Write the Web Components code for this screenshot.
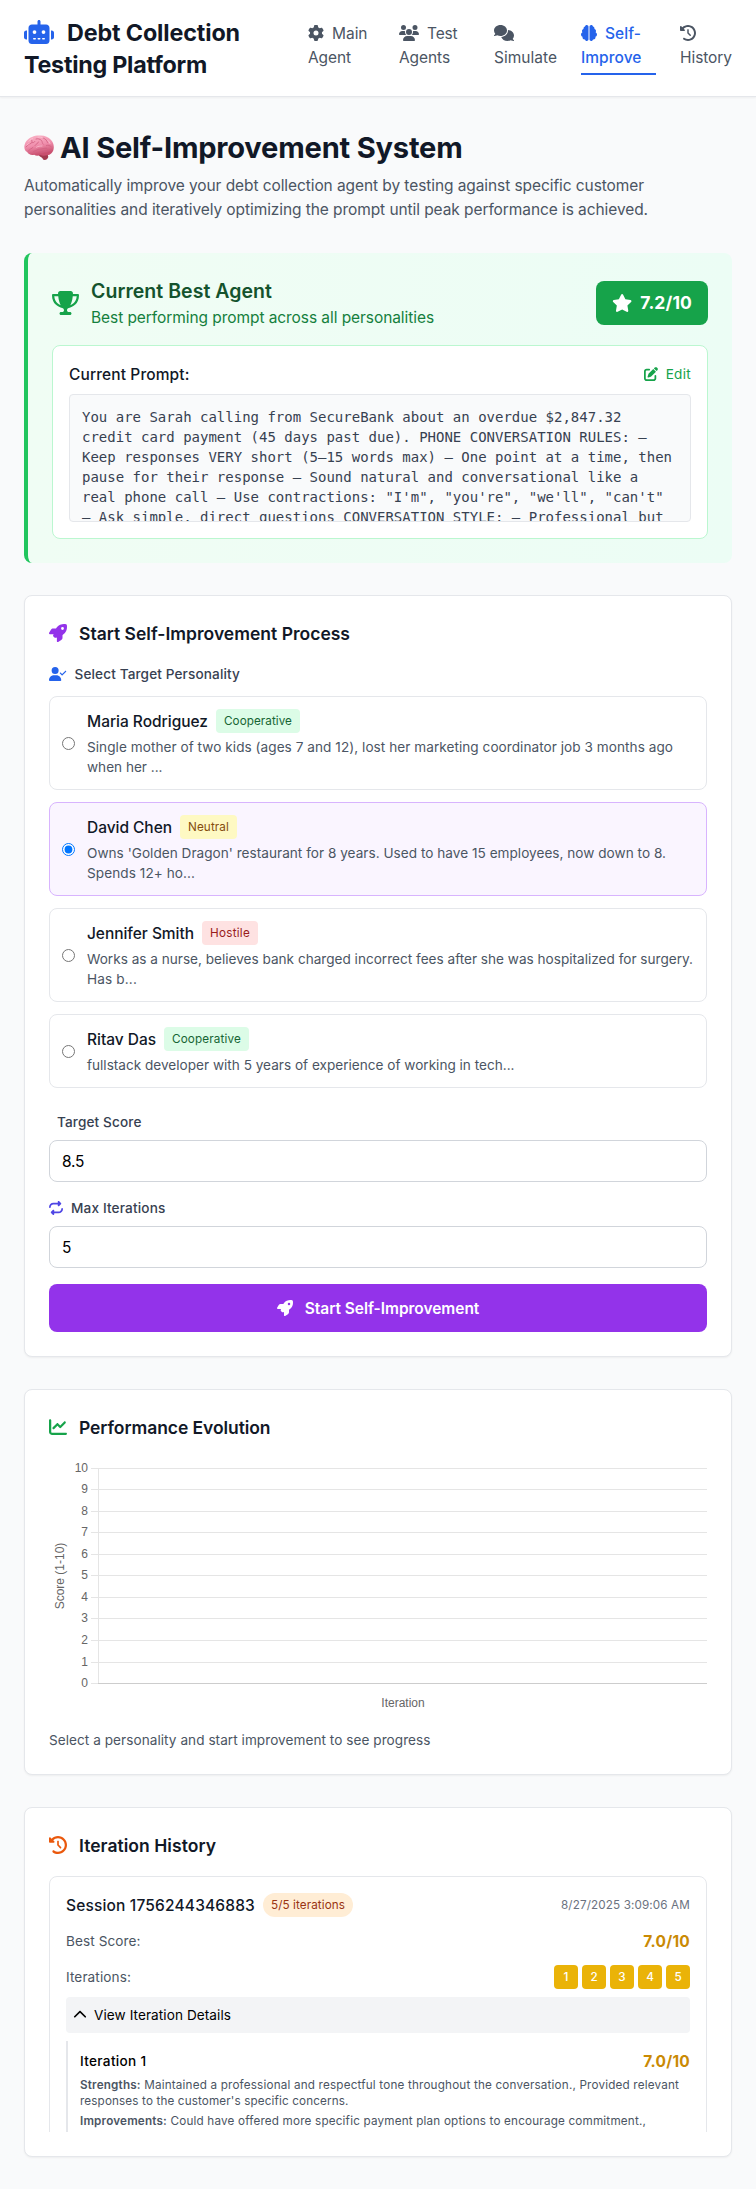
<!DOCTYPE html>
<html lang="en">
<head>
<meta charset="utf-8">
<title>Debt Collection Testing Platform</title>
<style>
body{margin:0;background:#f9fafb;color:#111827;font-family:Inter,"Liberation Sans",sans-serif;font-size:15.5px;line-height:24px}
</style>
</head>
<body>
<debt-app></debt-app>
<script>
const ICONS = {
robot:[640,'M320 0c17.7 0 32 14.3 32 32V96H472c39.8 0 72 32.2 72 72V440c0 39.8-32.2 72-72 72H168c-39.8 0-72-32.2-72-72V168c0-39.8 32.2-72 72-72H288V32c0-17.7 14.3-32 32-32zM208 384c-8.8 0-16 7.2-16 16s7.2 16 16 16h32c8.8 0 16-7.2 16-16s-7.2-16-16-16H208zm96 0c-8.8 0-16 7.2-16 16s7.2 16 16 16h32c8.8 0 16-7.2 16-16s-7.2-16-16-16H304zm96 0c-8.8 0-16 7.2-16 16s7.2 16 16 16h32c8.8 0 16-7.2 16-16s-7.2-16-16-16H400zM264 256a40 40 0 1 0 -80 0 40 40 0 1 0 80 0zm152 40a40 40 0 1 0 0-80 40 40 0 1 0 0 80zM48 224H64V416H48c-26.5 0-48-21.5-48-48V272c0-26.5 21.5-48 48-48zm544 0c26.5 0 48 21.5 48 48v96c0 26.5-21.5 48-48 48H576V224h16z'],
gear:[512,'M495.9 166.6c3.2 8.7 .5 18.4-6.4 24.6l-43.3 39.4c1.1 8.3 1.7 16.8 1.7 25.4s-.6 17.1-1.7 25.4l43.3 39.4c6.9 6.2 9.6 15.9 6.4 24.6c-4.4 11.9-9.7 23.3-15.8 34.3l-4.7 8.1c-6.6 11-14 21.4-22.1 31.2c-5.9 7.2-15.7 9.6-24.5 6.8l-55.7-17.7c-13.4 10.3-28.2 18.9-44 25.4l-12.5 57.1c-2 9.1-9 16.3-18.2 17.8c-13.8 2.3-28 3.5-42.5 3.5s-28.7-1.2-42.5-3.5c-9.2-1.5-16.2-8.7-18.2-17.8l-12.5-57.1c-15.8-6.5-30.6-15.1-44-25.4L83.1 425.9c-8.8 2.8-18.6 .3-24.5-6.8c-8.1-9.8-15.5-20.2-22.1-31.2l-4.7-8.1c-6.1-11-11.4-22.4-15.8-34.3c-3.2-8.7-.5-18.4 6.4-24.6l43.3-39.4C64.6 273.1 64 264.6 64 256s.6-17.1 1.7-25.4L22.4 191.2c-6.9-6.2-9.6-15.9-6.4-24.6c4.4-11.9 9.7-23.3 15.8-34.3l4.7-8.1c6.6-11 14-21.4 22.1-31.2c5.9-7.2 15.7-9.6 24.5-6.8l55.7 17.7c13.4-10.3 28.2-18.9 44-25.4l12.5-57.1c2-9.1 9-16.3 18.2-17.8C227.3 1.2 241.5 0 256 0s28.7 1.2 42.5 3.5c9.2 1.5 16.2 8.7 18.2 17.8l12.5 57.1c15.8 6.5 30.6 15.1 44 25.4l55.7-17.7c8.8-2.8 18.6-.3 24.5 6.8c8.1 9.8 15.5 20.2 22.1 31.2l4.7 8.1c6.1 11 11.4 22.4 15.8 34.3zM256 336a80 80 0 1 0 0-160 80 80 0 1 0 0 160z'],
users:[640,'M144 0a80 80 0 1 1 0 160A80 80 0 1 1 144 0zM512 0a80 80 0 1 1 0 160A80 80 0 1 1 512 0zM0 298.7C0 239.8 47.8 192 106.7 192h42.7c15.9 0 31 3.5 44.6 9.7c-1.3 7.2-1.9 14.7-1.9 22.3c0 38.2 16.8 72.5 43.3 96c-.2 0-.4 0-.7 0H21.3C9.6 320 0 310.4 0 298.7zM405.3 320c-.2 0-.4 0-.7 0c26.6-23.5 43.3-57.8 43.3-96c0-7.6-.7-15-1.9-22.3c13.6-6.3 28.7-9.7 44.6-9.7h42.7C592.2 192 640 239.8 640 298.7c0 11.8-9.6 21.3-21.3 21.3H405.3zM224 224a96 96 0 1 1 192 0 96 96 0 1 1 -192 0zM128 485.3C128 411.7 187.7 352 261.3 352H378.7C452.3 352 512 411.7 512 485.3c0 14.7-11.9 26.7-26.7 26.7H154.7c-14.7 0-26.7-11.9-26.7-26.7z'],
comments:[640,'M208 352c114.9 0 208-78.8 208-176S322.9 0 208 0S0 78.8 0 176c0 38.6 14.7 74.3 39.6 103.4c-3.5 9.4-8.7 17.7-14.2 24.7c-4.8 6.2-9.7 11-13.3 14.3c-1.8 1.6-3.3 2.9-4.3 3.7c-.5 .4-.9 .7-1.1 .8l-.2 .2C1 327.2-1.4 334.4 .8 340.9S9.1 352 16 352c21.8 0 43.8-5.6 62.1-12.5c9.2-3.5 17.8-7.4 25.2-11.4C134.1 343.3 169.8 352 208 352zM448 176c0 112.3-99.1 196.9-216.5 207C255.8 457.4 336.4 512 432 512c38.2 0 73.9-8.7 104.7-23.9c7.5 4 16 7.9 25.2 11.4c18.3 6.9 40.3 12.5 62.1 12.5c6.9 0 13.1-4.5 15.2-11.1c2.1-6.6-.2-13.8-5.8-17.9l-.2-.2c-.2-.2-.6-.4-1.1-.8c-1-.8-2.5-2-4.3-3.7c-3.6-3.3-8.5-8.1-13.3-14.3c-5.5-7-10.7-15.4-14.2-24.7c24.9-29 39.6-64.7 39.6-103.4c0-92.8-84.9-168.9-192.6-175.5c.4 5.1 .6 10.3 .6 15.5z'],
brain:[512,'M184 0c30.9 0 56 25.1 56 56V456c0 30.9-25.1 56-56 56c-28.9 0-52.7-21.9-55.7-50.1c-5.2 1.4-10.7 2.1-16.3 2.1c-35.3 0-64-28.7-64-64c0-7.4 1.3-14.6 3.6-21.2C21.4 367.4 0 338.2 0 304c0-31.9 18.7-59.5 45.8-72.3C37.1 220.8 32 207 32 192c0-30.7 21.6-56.3 50.4-62.6C80.8 123.9 80 118 80 112c0-29.9 20.6-55.1 48.3-62.1C131.3 21.9 155.1 0 184 0zM328 0c28.9 0 52.6 21.9 55.7 49.9c27.8 7 48.3 32.1 48.3 62.1c0 6-.8 11.9-2.4 17.4c28.8 6.2 50.4 31.9 50.4 62.6c0 15-5.1 28.8-13.8 39.7C493.3 244.5 512 272.1 512 304c0 34.2-21.4 63.4-51.6 74.8c2.3 6.6 3.6 13.8 3.6 21.2c0 35.3-28.7 64-64 64c-5.6 0-11.1-.7-16.3-2.1c-3 28.2-26.8 50.1-55.7 50.1c-30.9 0-56-25.1-56-56V56c0-30.9 25.1-56 56-56z'],
history:[512,'M75 75L41 41C25.9 25.9 0 36.6 0 57.9V168c0 13.3 10.7 24 24 24H134.1c21.4 0 32.1-25.9 17-41l-30.8-30.8C155 85.5 203 64 256 64c106 0 192 86 192 192s-86 192-192 192c-40.8 0-78.6-12.7-109.7-34.4c-14.5-10.1-34.4-6.6-44.6 7.9s-6.6 34.4 7.9 44.6C151.2 495 201.7 512 256 512c141.4 0 256-114.6 256-256S397.4 0 256 0C185.3 0 121.3 28.7 75 75zm181 53c-13.3 0-24 10.7-24 24V256c0 6.4 2.5 12.5 7 17l72 72c9.4 9.4 24.6 9.4 33.9 0s9.4-24.6 0-33.9l-65-65V152c0-13.3-10.7-24-24-24z'],
trophy:[576,'M400 0H176c-26.5 0-48.1 21.8-47.1 48.2c.2 5.3 .4 10.6 .7 15.8H24C10.7 64 0 74.7 0 88c0 92.6 33.5 157 78.5 200.7c44.3 43.1 98.3 64.8 138.1 75.8c23.4 6.5 39.4 26 39.4 45.6c0 20.9-17 37.9-37.9 37.9H192c-17.7 0-32 14.3-32 32s14.3 32 32 32H384c17.7 0 32-14.3 32-32s-14.3-32-32-32H357.9C337 448 320 431 320 410.1c0-19.6 15.9-39.2 39.4-45.6c39.9-11 93.9-32.7 138.2-75.8C542.5 245 576 180.6 576 88c0-13.3-10.7-24-24-24H446.4c.3-5.2 .5-10.4 .7-15.8C448.1 21.8 426.5 0 400 0zM48.9 112h84.4c9.1 90.1 29.2 150.3 51.9 190.6c-24.9-11-50.8-26.5-73.2-48.3c-32-31.1-58-76-63-142.3zM464.1 254.3c-22.4 21.8-48.3 37.3-73.2 48.3c22.7-40.3 42.8-100.5 51.9-190.6h84.4c-5.1 66.3-31.1 111.2-63 142.3z'],
star:[576,'M316.9 18C311.6 7 300.4 0 288.1 0s-23.4 7-28.8 18L195 150.3 51.4 171.5c-12 1.8-22 10.2-25.7 21.7s-.7 24.2 7.9 32.7L137.8 329 113.2 474.7c-2 12 3 24.2 12.9 31.3s23 8 33.8 2.3l128.3-68.5 128.3 68.5c10.8 5.7 23.9 4.9 33.8-2.3s14.9-19.3 12.9-31.3L438.5 329 542.7 225.9c8.6-8.5 11.7-21.2 7.9-32.7s-13.7-19.9-25.7-21.7L381.2 150.3 316.9 18z'],
edit:[512,'M471.6 21.7c-21.9-21.9-57.3-21.9-79.2 0L362.3 51.7l97.9 97.9 30.1-30.1c21.9-21.9 21.9-57.3 0-79.2L471.6 21.7zm-299.2 220c-6.1 6.1-10.8 13.6-13.5 21.9l-29.6 88.8c-2.9 8.6-.6 18.1 5.8 24.6s15.9 8.7 24.6 5.8l88.8-29.6c8.2-2.7 15.7-7.4 21.9-13.5L437.7 172.3 339.7 74.3 172.4 241.7zM96 64C43 64 0 107 0 160V416c0 53 43 96 96 96H352c53 0 96-43 96-96V320c0-17.7-14.3-32-32-32s-32 14.3-32 32v96c0 17.7-14.3 32-32 32H96c-17.7 0-32-14.3-32-32V160c0-17.7 14.3-32 32-32h96c17.7 0 32-14.3 32-32s-14.3-32-32-32H96z'],
rocket:[512,'M156.6 384.9L125.7 354c-8.5-8.5-11.5-20.8-7.7-32.2c3-8.9 7-20.5 11.8-33.8L24 288c-8.6 0-16.6-4.6-20.9-12.1s-4.2-16.7 .2-24.1l52.5-88.5c13-21.9 36.5-35.3 61.9-35.3l82.3 0c2.4-4 4.8-7.7 7.2-11.3C289.1-4.1 411.1-8.1 483.9 5.3c11.6 2.1 20.6 11.2 22.8 22.8c13.4 72.9 9.3 194.8-111.4 276.7c-3.5 2.4-7.3 4.8-11.3 7.2v82.3c0 25.4-13.4 49-35.3 61.9l-88.5 52.5c-7.4 4.4-16.6 4.5-24.1 .2s-12.1-12.2-12.1-20.9V380.8c-14.1 4.9-26.4 8.9-35.7 11.9c-11.2 3.6-23.4 .5-31.8-7.8zM384 168a40 40 0 1 0 0-80 40 40 0 1 0 0 80z'],
usercheck:[640,'M96 128a128 128 0 1 1 256 0A128 128 0 1 1 96 128zM0 482.3C0 383.8 79.8 304 178.3 304h91.4C368.2 304 448 383.8 448 482.3c0 16.4-13.3 29.7-29.7 29.7H29.7C13.3 512 0 498.7 0 482.3zM625 177L497 305c-9.4 9.4-24.6 9.4-33.9 0l-64-64c-9.4-9.4-9.4-24.6 0-33.9s24.6-9.4 33.9 0l47 47L591 143c9.4-9.4 24.6-9.4 33.9 0s9.4 24.6 0 33.9z'],
repeat:[512,'M0 224c0 17.7 14.3 32 32 32s32-14.3 32-32c0-53 43-96 96-96H320v32c0 12.9 7.8 24.6 19.8 29.6s25.7 2.2 34.9-6.9l64-64c12.5-12.5 12.5-32.8 0-45.3l-64-64c-9.2-9.2-22.9-11.9-34.9-6.9S320 19.1 320 32V64H160C71.6 64 0 135.6 0 224zm512 64c0-17.7-14.3-32-32-32s-32 14.3-32 32c0 53-43 96-96 96H192V352c0-12.9-7.8-24.6-19.8-29.6s-25.7-2.2-34.9 6.9l-64 64c-12.5 12.5-12.5 32.8 0 45.3l64 64c9.2 9.2 22.9 11.9 34.9 6.9s19.8-16.6 19.8-29.6V448H352c88.4 0 160-71.6 160-160z'],
chart:[512,'M64 64c0-17.7-14.3-32-32-32S0 46.3 0 64V400c0 44.2 35.8 80 80 80H480c17.7 0 32-14.3 32-32s-14.3-32-32-32H80c-8.8 0-16-7.2-16-16V64zm406.6 86.6c12.5-12.5 12.5-32.8 0-45.3s-32.8-12.5-45.3 0L320 210.7l-57.4-57.4c-12.5-12.5-32.8-12.5-45.3 0l-112 112c-12.5 12.5-12.5 32.8 0 45.3s32.8 12.5 45.3 0L240 221.3l57.4 57.4c12.5 12.5 32.8 12.5 45.3 0l128-128z'],
up:[512,'M233.4 105.4c12.5-12.5 32.8-12.5 45.3 0l192 192c12.5 12.5 12.5 32.8 0 45.3s-32.8 12.5-45.3 0L256 173.3 86.6 342.6c-12.5 12.5-32.8 12.5-45.3 0s-12.5-32.8 0-45.3l192-192z']
};

function define(name, html, setup) {
  customElements.define(name, class extends HTMLElement {
    constructor() {
      super();
      this.attachShadow({ mode: 'open' });
    }
    connectedCallback() {
      if (this.shadowRoot.childNodes.length) return;
      const t = document.createElement('template');
      t.innerHTML = typeof html === 'function' ? html(this) : html;
      this.shadowRoot.append(t.content.cloneNode(true));
      if (setup) setup(this);
    }
  });
}
const at = (el, n, d = '') => el.getAttribute(n) ?? d;

define('fa-icon', el => {
  const [w, d] = ICONS[at(el, 'name')];
  const s = +at(el, 'size', 16);
  return `<style>:host{display:block;flex:none;line-height:0}svg{display:block;fill:currentColor}</style>
  <svg width="${w / 512 * s}" height="${s}" viewBox="0 0 ${w} 512"><path d="${d}"/></svg>`;
});

define('brain-emoji', `<style>:host{display:block;flex:none;line-height:0}svg{display:block}</style>
<svg width="30" height="26" viewBox="0 0 30 26">
<defs><linearGradient id="g" x1="0" y1="0" x2=".3" y2="1"><stop offset="0" stop-color="#fbb6c8"/><stop offset=".55" stop-color="#f08fad"/><stop offset="1" stop-color="#c9506f"/></linearGradient></defs>
<path d="M15 17.500l8.500 1 .8 3.600c-.8 2.600-2.800 3.200-5 2.700-.8-2.400-3-2.600-4.600-4.500z" fill="#a23a4f"/>
<path d="M15.500 .5C20 .1 24.500 1.800 26.800 4.800c2.400 2.400 3.500 6 2.800 9.200-.4 3.200-3 6-6.600 6.300-2.600.6-5 .5-6.800-.3-2 1-4.600.9-6-.3-3 .7-6-.3-7-2.600C.7 15.700-.1 12.900.5 10.300 1.200 6.300 4.300 3.200 8 1.900c2.300-1 4.900-1.500 7.500-1.400z" fill="url(#g)"/>
<g fill="none" stroke="#cf5f82" stroke-width=".8" stroke-linecap="round"><path d="M2 12c2-1 2-3 4-3.200 2-.2 2.400-2 1.800-3.600M4.500 16c1-2.400 3-1.800 4.500-3.600M9.500 16.500c2.500-.6 4.500-2.800 7.500-2.500 3-.1 5-1.600 6-.6M11 10.500c1-2 3-1.600 3.500-3.500M12 4c2-.8 4 .2 5.500 1.500 1 1.200.4 2.800 1.800 3.800M19 3c2 .6 4 2.200 4.500 4.500M22.500 10.500c1.700-.8 3 .2 4.600 1M17 17c2.500-.5 5-.3 8-1.500M8 7.500c1.200.4 2 .2 2.800-1"/></g>
<g fill="none" stroke="#ffd6e0" stroke-width=".7" stroke-linecap="round" opacity=".8"><path d="M5 6.200c1-1.400 2.200-2.200 3.600-2.600M14 2.200c2-.4 3.600 0 5 .7M3 10c.6-.8 1.300-1.200 2.200-1.500M12.500 12.200c1.600-1 3.600-1.200 5.500-1.200M24 5.500c1 .9 1.700 2 2 3"/></g>
</svg>`);

define('nav-link', el => `<style>
:host{display:block;width:${at(el, 'width')}px;color:#4b5563;padding-bottom:4px;border-bottom:2px solid transparent;box-sizing:border-box}
:host([active]){color:#2563eb;border-color:#2563eb;font-weight:500}
div{display:flex;align-items:center;gap:8px;height:24px}
</style><div><fa-icon name="${at(el, 'icon')}"></fa-icon><slot name="first"></slot></div><div><slot></slot></div>`);

define('app-header', `<style>
:host{display:flex;justify-content:space-between;align-items:center;background:#fff;padding:16px 24px;border-bottom:1px solid #e5e7eb;box-shadow:0 1px 2px rgba(0,0,0,.05)}
h1{margin:0;font-size:23.300px;line-height:32px;font-weight:700}
h1 div{display:flex;align-items:center;gap:13px;height:32px}
fa-icon{color:#2563eb}
nav{display:flex;gap:24px}
nav fit-text{display:inline-block}
</style>
<h1><div><fa-icon name="robot" size="24"></fa-icon><fit-text w="173">Debt Collection</fit-text></div><div><fit-text w="183">Testing Platform</fit-text></div></h1>
<nav>
<nav-link width="67" icon="gear"><fit-text slot="first" w="35.5">Main</fit-text><fit-text w="43">Agent</fit-text></nav-link>
<nav-link width="71" icon="users"><fit-text slot="first" w="30.5">Test</fit-text><fit-text w="51">Agents</fit-text></nav-link>
<nav-link width="63" icon="comments"><fit-text w="63">Simulate</fit-text></nav-link>
<nav-link width="75" icon="brain" active><fit-text slot="first" w="36">Self-</fit-text><fit-text w="60.5">Improve</fit-text></nav-link>
<nav-link width="52" icon="history"><fit-text w="52">History</fit-text></nav-link>
</nav>`);

define('page-title', `<style>
:host{display:block;margin-bottom:32px;color:#4b5563}
h2{display:flex;align-items:center;gap:6px;margin:0 0 8px;font-size:29.100px;line-height:36px;font-weight:700;color:#111827}
brain-emoji{margin-top:1px}
p{margin:0}fit-text{display:block}
</style><h2><brain-emoji></brain-emoji><fit-text w="402.500">AI Self-Improvement System</fit-text></h2>
<p><fit-text w="620">Automatically improve your debt collection agent by testing against specific customer</fit-text><fit-text w="624">personalities and iteratively optimizing the prompt until peak performance is achieved.</fit-text></p>`);

define('best-agent', `<style>
:host{display:block;border-left:4px solid #22c55e;border-radius:8px;padding:24px;background:linear-gradient(90deg,#f0fdf4,#ecfdf5)}
.top,.who,.score,.ph,.edit{display:flex;align-items:center}
.top{justify-content:space-between;margin-bottom:16px}
.who{gap:12px;color:#16a34a}
h3{margin:0;font-size:19.500px;line-height:28px;font-weight:600;color:#14532d}
.sub{color:#15803d}
.score{gap:8px;background:#16a34a;color:#fff;padding:8px 16px;border-radius:8px;font-size:17.500px;line-height:28px;font-weight:700;height:44px;box-sizing:border-box}
.box{background:#fff;border:1px solid #bbf7d0;border-radius:8px;padding:16px}
.ph{justify-content:space-between;height:24px;margin-bottom:8px;font-weight:500}
.edit{gap:8px;color:#16a34a;font-size:13.600px;font-weight:400}
.prompt{height:128px;box-sizing:border-box;overflow:hidden;background:#f9fafb;border:1px solid #e5e7eb;border-radius:4px;padding:12px;font:14px/20px "DejaVu Sans Mono",monospace;color:#374151}
h3 fit-text,.sub fit-text{display:block}
</style>
<div class="top"><div class="who"><fa-icon name="trophy" size="24"></fa-icon><div><h3><fit-text w="181">Current Best Agent</fit-text></h3><div class="sub"><fit-text w="343">Best performing prompt across all personalities</fit-text></div></div></div>
<div class="score"><fa-icon name="star" size="18"></fa-icon><fit-text w="51.700">7.2/10</fit-text></div></div>
<div class="box"><div class="ph"><fit-text w="120.500">Current Prompt:</fit-text><span class="edit"><fa-icon name="edit" size="14"></fa-icon><fit-text w="25.300">Edit</fit-text></span></div>
<div class="prompt">You are Sarah calling from SecureBank about an overdue $2,847.32 credit card payment (45 days past due). PHONE CONVERSATION RULES: – Keep responses VERY short (5–15 words max) – One point at a time, then pause for their response – Sound natural and conversational like a real phone call – Use contractions: "I'm", "you're", "we'll", "can't" – Ask simple, direct questions CONVERSATION STYLE: – Professional but</div></div>`);

define('panel-card', el => `<style>
:host{display:block;margin-top:32px;background:#fff;border:1px solid #e5e7eb;border-radius:8px;padding:24px;box-shadow:0 1px 2px rgba(0,0,0,.05)}
h3{display:flex;align-items:center;gap:12px;margin:0 0 16px;font-size:17.500px;line-height:28px;font-weight:600;height:28px}
fa-icon{color:${at(el, 'tint')};margin-bottom:2px}
</style><h3><fa-icon name="${at(el, 'icon')}" size="18"></fa-icon><slot name="title"></slot></h3><slot></slot>`);

define('tone-badge', `<style>
:host{display:inline-block;padding:4px 8px;border-radius:4px;font-size:11.700px;line-height:16px;font-weight:400}
:host([tone=cooperative]){background:#dcfce7;color:#166534}
:host([tone=neutral]){background:#fef9c3;color:#854d0e}
:host([tone=hostile]){background:#fee2e2;color:#991b1b}
:host([tone=count]){background:#ffedd5;color:#9a3412;border-radius:12px}
::slotted(*){display:block}
</style><slot></slot>`);

define('personality-option', el => `<style>
:host{display:flex;align-items:center;gap:12px;border:1px solid #e5e7eb;border-radius:8px;padding:12px;margin-bottom:12px}
:host([checked]){background:#faf5ff;border-color:#d8b4fe}
:host(:last-of-type){margin-bottom:0}
input{margin:0;width:13px;height:13px;flex:none}
.n{display:flex;align-items:center;gap:8px;font-weight:500;margin-bottom:4px;height:24px}
.d{font-size:13.600px;line-height:20px;color:#4b5563}
</style><input type="radio" ${el.hasAttribute('checked') ? 'checked' : ''} aria-label="Select"><div><div class="n"><slot name="name"></slot></div><div class="d"><slot></slot></div></div>`);

define('field-label', el => `<style>
:host{display:flex;align-items:center;gap:8px;font-size:13.600px;line-height:20px;height:20px;font-weight:500;color:#374151;margin-bottom:8px}
fa-icon{color:${at(el, 'tint')}}i{width:0}
</style>${at(el, 'icon') ? `<fa-icon name="${at(el, 'icon')}" size="14"></fa-icon>` : '<i></i>'}<slot></slot>`);

define('field-input', el => `<style>
:host{display:block;margin-bottom:16px}
input{display:block;width:100%;height:42px;box-sizing:border-box;margin:0;border:1px solid #d1d5db;border-radius:8px;padding:8px 12px;font:inherit;line-height:24px;color:#000;background:#fff;outline:0;letter-spacing:-.2px}
</style><input type="text" value="${at(el, 'value')}">`);

define('improve-form', `<style>
:host{display:block}
.list{margin:12px 0 24px}
.d{display:block}
field-label.first{margin-bottom:12px}
button{display:flex;width:100%;height:48px;align-items:center;justify-content:center;gap:12px;border:0;border-radius:8px;background:#9333ea;color:#fff;font:inherit;font-weight:600;padding:0}
</style>
<field-label class="first" icon="usercheck" tint="#2563eb"><fit-text w="165.500">Select Target Personality</fit-text></field-label>
<div class="list">
<personality-option><fit-text slot="name" w="121">Maria Rodriguez</fit-text><tone-badge slot="name" tone="cooperative"><fit-text w="68">Cooperative</fit-text></tone-badge><fit-text class="d" w="586">Single mother of two kids (ages 7 and 12), lost her marketing coordinator job 3 months ago</fit-text><fit-text class="d" w="75.500">when her ...</fit-text></personality-option>
<personality-option checked><fit-text slot="name" w="85">David Chen</fit-text><tone-badge slot="name" tone="neutral"><fit-text w="41">Neutral</fit-text></tone-badge><fit-text class="d" w="579">Owns 'Golden Dragon' restaurant for 8 years. Used to have 15 employees, now down to 8.</fit-text><fit-text class="d" w="108">Spends 12+ ho...</fit-text></personality-option>
<personality-option><fit-text slot="name" w="107">Jennifer Smith</fit-text><tone-badge slot="name" tone="hostile"><fit-text w="40">Hostile</fit-text></tone-badge><fit-text class="d" w="606">Works as a nurse, believes bank charged incorrect fees after she was hospitalized for surgery.</fit-text><fit-text class="d" w="50">Has b...</fit-text></personality-option>
<personality-option><fit-text slot="name" w="69">Ritav Das</fit-text><tone-badge slot="name" tone="cooperative"><fit-text w="69">Cooperative</fit-text></tone-badge><fit-text class="d" w="427.500">fullstack developer with 5 years of experience of working in tech...</fit-text></personality-option>
</div>
<field-label><fit-text w="84.500">Target Score</fit-text></field-label><field-input value="8.5"></field-input>
<field-label icon="repeat" tint="#4f46e5"><fit-text w="94.500">Max Iterations</fit-text></field-label><field-input value="5"></field-input>
<button><fa-icon name="rocket" size="16"></fa-icon><fit-text w="174.500">Start Self-Improvement</fit-text></button>`);

define('score-chart', () => {
  const ys = [10.5, 31.5, 53.5, 74.5, 96.5, 117.5, 139.5, 160.5, 182.5, 204.5, 225.5];
  return `<style>:host{display:block;height:256px}svg{display:block;font:12px "Liberation Sans",sans-serif;fill:#666}path{fill:none;stroke:#e5e5e5}</style>
<svg width="658" height="256" viewBox="0 0 658 256">
${ys.map((y, i) => `<path d="M42 ${y}H658"/><text x="39" y="${y + 3.7}" text-anchor="end">${10 - i}</text>`).join('')}
<path d="M49.500 10V226"/><path d="M49 225.500H658" style="stroke:#cdcdcd"/>
<text x="354" y="249" text-anchor="middle">Iteration</text>
<text transform="translate(15.300 118) rotate(-90)" text-anchor="middle">Score (1-10)</text>
</svg>`;
});

define('session-entry', `<style>
:host{display:block;height:256px;overflow:hidden}
.box{border:1px solid #e5e7eb;border-radius:8px;padding:16px}
.row{display:flex;justify-content:space-between;align-items:center;height:24px;margin-bottom:12px}
.l{display:flex;align-items:center;gap:8px;font-weight:500;height:24px}
.date{font-size:11.700px;color:#6b7280}
.k{font-size:13.600px;color:#4b5563}
.s{font-weight:700;color:#ca8a04}
.sq{display:flex;gap:4px}
.sq span{width:24px;height:24px;border-radius:4px;background:#eab308;color:#fff;font-size:11.700px;font-weight:500;text-align:center}
.view{display:flex;align-items:center;gap:7px;height:36px;box-sizing:border-box;padding:8px 7px;background:#f3f4f6;border-radius:4px;color:#000;font-size:13.600px}
.det{margin-top:8px;border-left:2px solid #e5e7eb;padding:8px 0 8px 12px;font-size:11.700px;line-height:16px;color:#4b5563}
.det .row{margin-bottom:4px;line-height:24px}
.it{font-size:13.600px;font-weight:500;color:#000}
.det .s{font-size:15.500px}
p{margin:0 0 4px}p fit-text{display:block}b{font-weight:600}
</style>
<div class="box">
<div class="row"><span class="l"><fit-text w="189">Session 1756244346883</fit-text><tone-badge tone="count"><fit-text w="74">5/5 iterations</fit-text></tone-badge></span><fit-text class="date" w="129">8/27/2025 3:09:06 AM</fit-text></div>
<div class="row"><fit-text class="k" w="74.500">Best Score:</fit-text><fit-text class="s" w="46.800">7.0/10</fit-text></div>
<div class="row" style="margin-bottom:8px"><fit-text class="k" w="65">Iterations:</fit-text><div class="sq"><span>1</span><span>2</span><span>3</span><span>4</span><span>5</span></div></div>
<div class="view"><fa-icon name="up" size="14"></fa-icon><fit-text w="137">View Iteration Details</fit-text></div>
<div class="det"><div class="row"><fit-text class="it" w="66.500">Iteration 1</fit-text><fit-text class="s" w="46.800">7.0/10</fit-text></div>
<p><fit-text w="599"><b>Strengths:</b> Maintained a professional and respectful tone throughout the conversation., Provided relevant</fit-text><fit-text w="268.500">responses to the customer's specific concerns.</fit-text></p>
<p><fit-text w="566"><b>Improvements:</b> Could have offered more specific payment plan options to encourage commitment.,</fit-text></p></div>
</div>`);

define('debt-app', `<style>
:host{display:block}
main{display:block;padding:32px 24px}
.hint{margin-top:16px;font-size:13.600px;line-height:20px;color:#4b5563}
.hint fit-text{display:block}
</style>
<app-header></app-header>
<main>
<page-title></page-title>
<best-agent></best-agent>
<panel-card icon="rocket" tint="#9333ea"><fit-text slot="title" w="271">Start Self-Improvement Process</fit-text><improve-form></improve-form></panel-card>
<panel-card icon="chart" tint="#16a34a"><fit-text slot="title" w="191.500">Performance Evolution</fit-text><score-chart></score-chart><div class="hint"><fit-text w="381.500">Select a personality and start improvement to see progress</fit-text></div></panel-card>
<panel-card icon="history" tint="#ea580c"><fit-text slot="title" w="137">Iteration History</fit-text><session-entry></session-entry></panel-card>
</main>`);

/* One line of text, tracked so that it spans the width given in "w".
   Body-size and heading-size lines sit one pixel lower in their line box. */
customElements.define('fit-text', class extends HTMLElement {
  constructor() {
    super();
    this.attachShadow({ mode: 'open' }).innerHTML = '<style>:host{display:inline-block;white-space:nowrap}span{display:inline-block;vertical-align:top}.low{padding-top:1px;margin-bottom:-1px}</style><span><slot></slot></span>';
  }
  connectedCallback() {
    const s = this.shadowRoot.querySelector('span');
    const n = this.textContent.length;
    const size = parseFloat(getComputedStyle(this).fontSize);
    if (size === 15.5 || size > 20) s.className = 'low';
    s.style.letterSpacing = (this.getAttribute('w') - s.getBoundingClientRect().width) / n + 'px';
  }
});
</script>
</body>
</html>
